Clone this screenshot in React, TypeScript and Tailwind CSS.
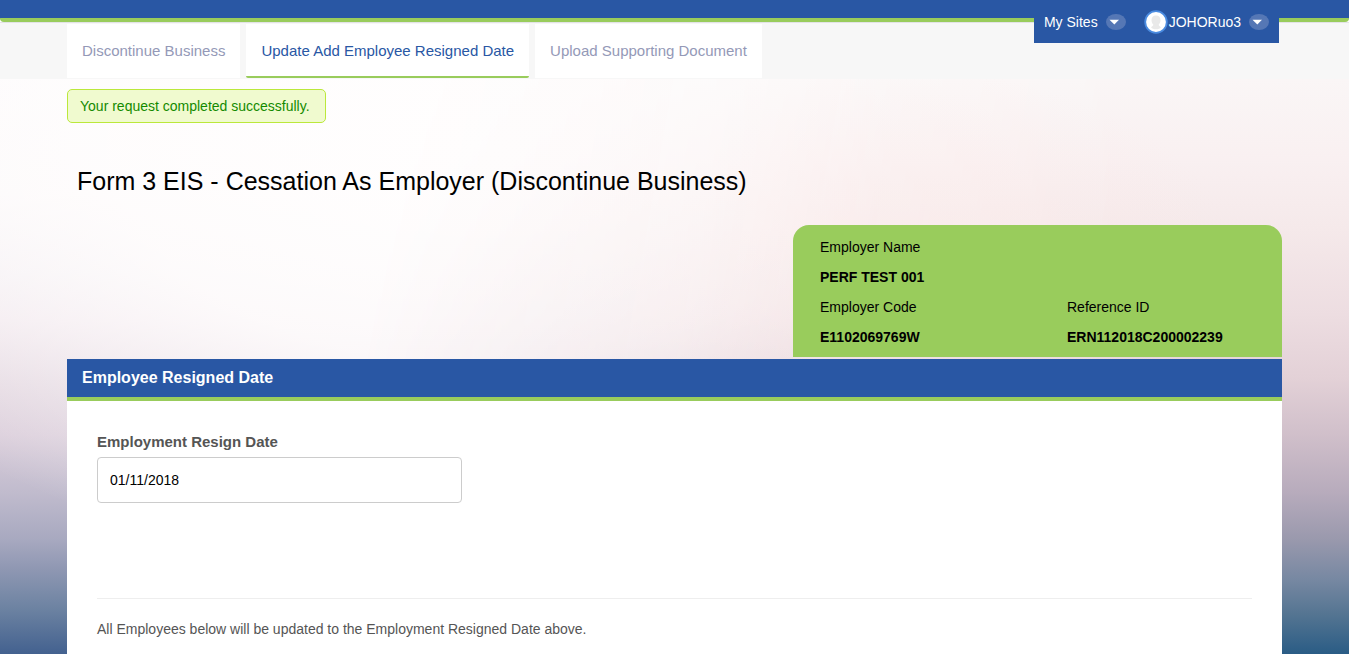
import React from "react";

const tabs = [
  { label: "Discontinue Business", active: false },
  { label: "Update Add Employee Resigned Date", active: true },
  { label: "Upload Supporting Document", active: false },
];

function CaretBadge() {
  return (
    <svg width="20" height="16" viewBox="0 0 20 16" aria-hidden="true">
      <ellipse cx="10" cy="8" rx="10" ry="8" fill="#5577b5" />
      <path d="M3.500 5.800h9.500l-4.700 4.700z" fill="#fff" />
    </svg>
  );
}

function Avatar() {
  return (
    <svg width="24" height="24" viewBox="0 0 24 24" aria-hidden="true">
      <circle cx="12" cy="12" r="10.800" fill="#fff" stroke="#4a8be0" strokeWidth="1.800" />
      <path
        d="M12 5.500c-3 0-4.500 1.800-4.500 4.500 0 2 .8 3.500 1.800 4.500.2 1.300-1.300 1.600-2.200 2.900 1.400 2.400 8.400 2.400 9.800 0-.9-1.300-2.400-1.600-2.200-2.900 1-1 1.800-2.500 1.800-4.500 0-2.700-1.500-4.500-4.500-4.500z"
        fill="#e9e9e9"
      />
    </svg>
  );
}

function UserBar() {
  return (
    <div className="absolute top-0 right-[70px] flex h-[43px] items-center gap-[18px] bg-[#2957a4] px-2.5 text-sm text-white">
      <button type="button" className="flex items-center gap-2">
        My Sites
        <CaretBadge />
      </button>
      <button type="button" className="flex items-center">
        <Avatar />
        <span className="mr-2 ml-px">JOHORuo3</span>
        <CaretBadge />
      </button>
    </div>
  );
}

function Header() {
  return (
    <header className="relative z-10">
      <div className="h-[22px] rounded-b-sm border-b-4 border-[#99cc5c] bg-[#2957a4]" />
      <nav className="flex gap-1.5 border-t border-[#e3e3e6] bg-[#f7f7f7] px-[67px] pt-px pb-px">
        {tabs.map((tab) => (
          <a
            key={tab.label}
            href="#"
            aria-current={tab.active ? "page" : undefined}
            className={
              tab.active
                ? "flex h-[54px] items-center rounded-b-xs border-b-2 border-[#99cc5c] bg-white px-[15px] pt-0.5 text-[15px] text-[#2957a4]"
                : "flex h-[54px] items-center border-b-2 border-white bg-white px-[15px] pt-0.5 text-[15px] text-[#9499b7]"
            }
          >
            {tab.label}
          </a>
        ))}
      </nav>
      <UserBar />
    </header>
  );
}

function Backdrop() {
  return (
    <div aria-hidden="true" className="absolute inset-0">
      <div className="absolute inset-0 bg-[radial-gradient(ellipse_55%_75%_at_36%_12%,#fffefe_0%,#fffdfdd9_50%,#fffdfd00_100%),linear-gradient(to_bottom,#fcfbfc_0%,#fbf8f9_20%,#f3eef2_34%,#f0e6ec_42%,#e3d7e0_53%,#dacdda_62%,#c0bbcd_72%,#a8a9c0_80%,#9098b3_85%,#6d83a2_92%,#43618f_100%)]" />
      <div className="absolute inset-0 bg-[radial-gradient(ellipse_26%_36%_at_66%_34%,#fbe9e7b3_0%,#fbe9e700_100%),linear-gradient(to_bottom,#faf6f6_0%,#f9f0f1_14%,#f5e9ea_26%,#eddde1_41%,#e3d1d7_52%,#d0bfca_62%,#b7abbc_72%,#9a99ad_80%,#7788a2_87%,#557592_93%,#2a5c85_100%)] mask-[linear-gradient(100deg,transparent_28%,#0006_50%,#000c_62%,#000_80%)]" />
    </div>
  );
}

function EmployerCard() {
  return (
    <dl className="grid w-[489px] grid-cols-[247px_1fr] rounded-t-2xl bg-[#99cc5c] px-[27px] pt-[7px] pb-[5px] text-sm leading-[30px] text-black">
      <div className="col-span-2">
        <dt>Employer Name</dt>
        <dd className="font-bold">PERF TEST 001</dd>
      </div>
      <div>
        <dt>Employer Code</dt>
        <dd className="font-bold">E1102069769W</dd>
      </div>
      <div>
        <dt>Reference ID</dt>
        <dd className="font-bold">ERN112018C200002239</dd>
      </div>
    </dl>
  );
}

export default function App() {
  return (
    <div className="flex min-h-screen flex-col bg-white font-['Liberation_Sans',Arial,sans-serif]">
      <Header />
      <div className="relative flex grow flex-col">
        <Backdrop />
        <main className="relative flex grow flex-col px-[67px] pt-2.5">
          <p
            role="status"
            className="self-start rounded-[5px] border border-[#bbe83b] bg-[#f0facf] py-1.5 pr-[15px] pl-3 text-sm leading-5 text-[#148a00]"
          >
            Your request completed successfully.
          </p>
          <h1 className="mt-10 pl-2.5 text-[25px] leading-9 text-black">
            Form 3 EIS - Cessation As Employer (Discontinue Business)
          </h1>
          <div className="mt-[26px] mb-0.5 flex justify-end">
            <EmployerCard />
          </div>
          <section className="flex grow flex-col bg-white">
            <h2 className="border-b-4 border-[#99cc5c] bg-[#2957a4] px-[15px] py-[7px] text-base leading-6 font-bold text-white">
              Employee Resigned Date
            </h2>
            <div className="px-[30px] pt-[30px]">
              <label htmlFor="resign-date" className="block text-[15px] leading-[22px] font-bold text-[#555]">
                Employment Resign Date
              </label>
              <input
                id="resign-date"
                type="text"
                defaultValue="01/11/2018"
                className="mt-1 block h-[46px] w-[365px] rounded border border-[#ccc] bg-white px-3 text-sm text-black"
              />
              <hr className="mt-[95px] border-[#eee]" />
              <p className="mt-5 text-sm leading-5 text-[#555]">
                All Employees below will be updated to the Employment Resigned Date above.
              </p>
            </div>
          </section>
        </main>
      </div>
    </div>
  );
}
